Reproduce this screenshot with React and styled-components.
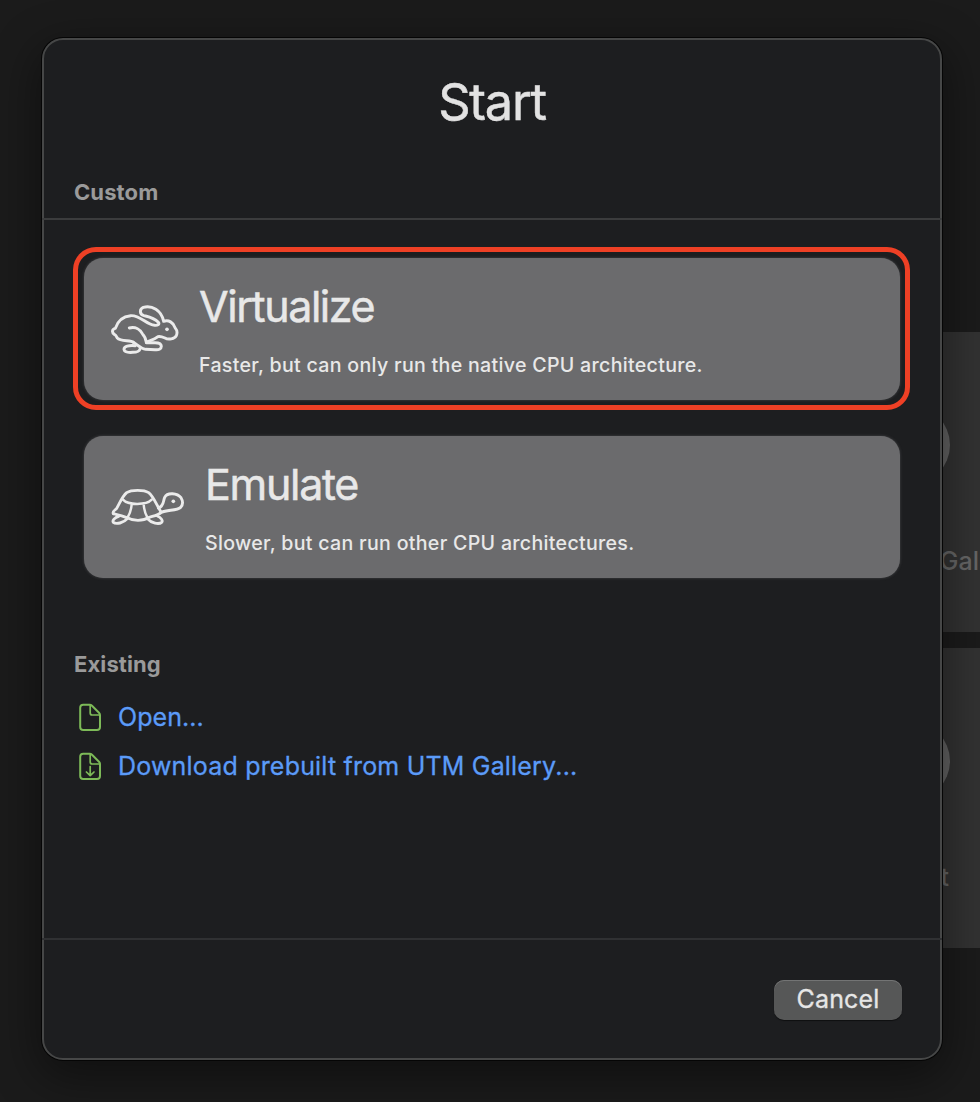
import React from "react";
import styled, { createGlobalStyle } from "styled-components";

const GlobalStyle = createGlobalStyle`
  *, *::before, *::after { box-sizing: border-box; }
  html, body { margin: 0; background: #1b1b1b; }
  body {
    font-family: Inter, "Liberation Sans", sans-serif;
    -webkit-font-smoothing: antialiased;
  }
`;

const Window = styled.div`
  position: relative;
  width: 980px;
  height: 1102px;
  overflow: hidden;
  background: #1b1b1b;
`;

const Shortcuts = styled.div`
  display: flex;
  flex-direction: column;
  gap: 16px;
  width: 300px;
  margin-left: 760px;
  padding-top: 332px;
`;

const ShortcutCard = styled.div`
  display: flex;
  flex-direction: column;
  align-items: center;
  height: 300px;
  padding-top: 73px;
  background: #323232;
`;

const ShortcutDisc = styled.div`
  width: 80px;
  height: 80px;
  border-radius: 50%;
  background: #626262;
`;

const ShortcutLabel = styled.span`
  margin-top: 60px;
  padding-right: ${(p) => p.$inset || 0}px;
  color: #666;
  font-size: 25px;
  font-weight: 450;
  line-height: 32px;
  white-space: nowrap;
`;

const Sheet = styled.section`
  position: absolute;
  top: 38px;
  left: 42px;
  display: flex;
  flex-direction: column;
  width: 900px;
  height: 1022px;
  border: 2px solid #464747;
  border-radius: 21px;
  background: #1d1e20;
  box-shadow: 0 0 0 1px #050505, 0 14px 46px 4px rgba(0, 0, 0, 0.42);
`;

const Title = styled.h1`
  margin: 32px 0 0;
  color: #e2e2e2;
  font-size: 50.5px;
  font-weight: 400;
  line-height: 60px;
  letter-spacing: ${(p) => p.$track}px;
  text-align: center;
  -webkit-text-stroke: 0.5px currentColor;
`;

const SectionTitle = styled.h2`
  margin: ${(p) => p.$top}px 0 0 30px;
  color: #9a9a9a;
  font-size: 22px;
  font-weight: 700;
  line-height: 28px;
  letter-spacing: ${(p) => p.$track}px;
`;

const Divider = styled.hr`
  flex: none;
  height: ${(p) => p.$size}px;
  margin: ${(p) => p.$top}px -2px 0;
  border: 0;
  background: ${(p) => p.$color};
`;

const Choices = styled.div`
  display: flex;
  flex-direction: column;
  gap: 15px;
  margin: 27px 30px 0 29px;
`;

const Highlight = styled.div`
  width: 837px;
  padding: 6px 5px 5px 6px;
  border: 5px solid ${(p) => (p.$active ? "#ee4025" : "transparent")};
  border-radius: 23px;
`;

const Choice = styled.button`
  display: flex;
  align-items: flex-start;
  width: 816px;
  height: 142px;
  margin: 0;
  padding: 0 0 0 26.5px;
  border: 0;
  border-radius: 19px;
  background: #6b6b6d;
  box-shadow: 0 0 3px rgba(120, 120, 122, 0.45);
  color: #e8e8e8;
  font-family: inherit;
  text-align: left;
`;

const ChoiceText = styled.span`
  display: flex;
  flex-direction: column;
  padding-left: 20.5px;
  padding-top: 22px;
`;

const ChoiceName = styled.span`
  font-size: 43px;
  font-weight: 400;
  line-height: 52px;
  letter-spacing: ${(p) => p.$track}px;
  -webkit-text-stroke: 0.5px currentColor;
`;

const ChoiceNote = styled.span`
  margin-top: 20px;
  font-size: 19.6px;
  font-weight: 500;
  line-height: 26px;
  letter-spacing: ${(p) => p.$track}px;
  white-space: nowrap;
`;

const RabbitIcon = styled.svg`
  flex: none;
  width: 68px;
  height: 51px;
  margin-top: 46.5px;
`;

const TurtleIcon = styled.svg`
  flex: none;
  width: 74px;
  height: 39px;
  margin-top: 52.3px;
`;

const Links = styled.div`
  display: flex;
  flex-direction: column;
  gap: 17px;
  margin: 23px 0 0 34px;
`;

const LinkRow = styled.a`
  display: flex;
  align-items: center;
  gap: 16px;
  height: 32px;
  color: #5b9bf8;
  font-size: 25px;
  font-weight: 400;
  line-height: 32px;
  letter-spacing: ${(p) => p.$track}px;
  white-space: nowrap;
  -webkit-text-stroke: 0.3px currentColor;
`;

const FileGlyph = styled.svg`
  flex: none;
  width: 24px;
  height: 28px;
`;

const Footer = styled.footer`
  display: flex;
  justify-content: flex-end;
  padding: 40px 38px 0 0;
`;

const CancelButton = styled.button`
  width: 128px;
  height: 40px;
  margin: 0;
  padding: 0 0 2px;
  border: 0;
  border-radius: 10px;
  background: #565757;
  box-shadow: inset 0 1px 0 #737474, 0 1px 1px rgba(0, 0, 0, 0.5);
  color: #e6e6e6;
  font-family: inherit;
  font-size: 25px;
  font-weight: 400;
  letter-spacing: ${(p) => p.$track}px;
  -webkit-text-stroke: 0.3px currentColor;
`;

function Rabbit() {
  return (
    <RabbitIcon viewBox="33 42 204 153" fill="none" stroke="#ebebeb" strokeWidth="8.8" strokeLinecap="round" strokeLinejoin="round">
      <path d="M100 154C92 147 62 152 52 141C48 136 49 133 44 131C35 126 35 114 46 112C53 90 70 76 92 74C122 72 137 101 164 103C173 104 180 99 175 94C161 80 148 78 132 74C118 70 118 54 130 49C156 42 184 58 191 91C206 86 220 94 225 110C230 116 233 125 229 134C224 144 205 147 195 141C188 138 181 135 174 137C164 145 153 148 139 154C137 141 132 133 127 128C121 117 107 106 88 111" />
      <path d="M139 155H165C177 155 184 159 184 166C184 175 176 177 165 176L137 175C120 173 113 161 100 154" />
      <path d="M106 164C86 162 72 166 72 175C73 184 85 185 98 184C108 184 118 182 120 174" />
      <circle cx="201" cy="115" r="5.5" fill="#ebebeb" stroke="none" />
    </RabbitIcon>
  );
}

function Turtle() {
  return (
    <TurtleIcon viewBox="33 39 222 117" fill="none" stroke="#ebebeb" strokeWidth="8.5" strokeLinecap="round" strokeLinejoin="round">
      <path d="M40 116C36 109 46 105 50 100C59 84 67 64 80 53C94 44 132 44 146 53C160 64 168 86 183 111" />
      <path d="M40 116C52 119 64 121 78 127C100 139 128 139 148 127C160 123 174 121 184 112C202 104 231 107 242 97C249 89 249 78 243 68C232 54 202 51 194 67C189 79 192 94 175 99" />
      <path d="M69 74C84 91 139 91 155 74M95 87C94 103 89 117 83 127M131 87C132 103 136 117 142 127" strokeWidth="7.4" />
      <path d="M56 124C44 127 36 137 40 142C48 149 71 144 82 131" />
      <path d="M172 123C182 127 190 137 185 142C177 149 154 145 142 131" />
      <circle cx="220" cy="79" r="5.5" fill="#ebebeb" stroke="none" />
    </TurtleIcon>
  );
}

function FileIcon({ download }) {
  return (
    <FileGlyph viewBox="-0.6 -0.5 24 28" fill="none" stroke="#7dba58" strokeWidth="2" strokeLinecap="round" strokeLinejoin="round">
      <path d="M4.6 1.3H11C12 1.3 12.6 1.5 13.4 2.3L20.4 9.3C21.2 10.1 21.4 10.7 21.4 11.7V23.5C21.4 25.6 20.5 26.5 18.4 26.5H4.6C2.5 26.5 1.6 25.6 1.6 23.5V4.3C1.6 2.2 2.5 1.3 4.6 1.3Z" />
      <path d="M11.6 2V9.5C11.6 10.9 12.2 11.5 13.6 11.5H21" strokeWidth="1.7" />
      {download && <path d="M11.6 14V23M7.8 19.5L11.6 23.2L15.4 19.5" strokeWidth="1.7" />}
    </FileGlyph>
  );
}

export default function App() {
  return (
    <>
      <GlobalStyle />
      <Window>
        <Shortcuts>
          <ShortcutCard>
            <ShortcutDisc />
            <ShortcutLabel $inset={16}>Browse UTM Gallery</ShortcutLabel>
          </ShortcutCard>
          <ShortcutCard>
            <ShortcutDisc />
            <ShortcutLabel $inset={18}>Support</ShortcutLabel>
          </ShortcutCard>
        </Shortcuts>
        <Sheet>
          <Title $track={-1.25}>Start</Title>
          <SectionTitle $top={46} $track={0.1}>Custom</SectionTitle>
          <Divider $top={12} $size={2} $color="#3b3c3d" />
          <Choices>
            <Highlight $active>
              <Choice>
                <Rabbit />
                <ChoiceText>
                  <ChoiceName $track={-1.45}>Virtualize</ChoiceName>
                  <ChoiceNote $track={0.3}>Faster, but can only run the native CPU architecture.</ChoiceNote>
                </ChoiceText>
              </Choice>
            </Highlight>
            <Highlight>
              <Choice>
                <Turtle />
                <ChoiceText>
                  <ChoiceName $track={-1.3}>Emulate</ChoiceName>
                  <ChoiceNote $track={0.3}>Slower, but can run other CPU architectures.</ChoiceNote>
                </ChoiceText>
              </Choice>
            </Highlight>
          </Choices>
          <SectionTitle $top={62} $track={0.1}>Existing</SectionTitle>
          <Links>
            <LinkRow $track={0.05}>
              <FileIcon />
              Open...
            </LinkRow>
            <LinkRow $track={0.19}>
              <FileIcon download />
              Download prebuilt from UTM Gallery...
            </LinkRow>
          </Links>
          <Divider $top={156} $size={2} $color="#303133" />
          <Footer>
            <CancelButton $track={0.15}>Cancel</CancelButton>
          </Footer>
        </Sheet>
      </Window>
    </>
  );
}
